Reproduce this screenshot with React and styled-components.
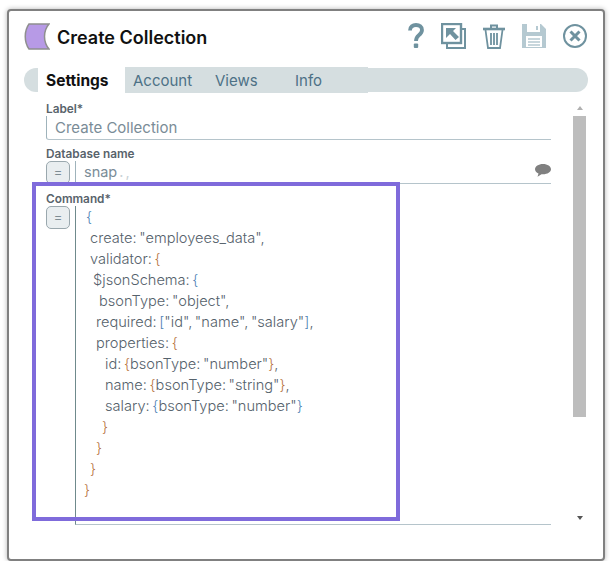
import React from 'react';
import styled, { createGlobalStyle } from 'styled-components';

const Global = createGlobalStyle`
  html, body { margin: 0; padding: 0; background: #fff; }
  body { font-family: "Inter", "Liberation Sans", sans-serif; }
`;
const Dialog = styled.div`
  position: relative; box-sizing: border-box; width: 598px; height: 552px; margin: 9px 0 0 7px;
  background: #fff; border: 2px solid #808080; border-radius: 4px;
  box-shadow: 0 0 5px rgba(0,0,0,.3); padding: 11px 15px 0 15px;
`;
const Header = styled.header`display: flex; align-items: center; height: 28px; padding-right: 1px;`;
const Logo = styled.svg`width: 26px; height: 27px; flex: none;`;
const Title = styled.h1`margin: 2px 0 0 7px; font-size: 18px; font-weight: 600; color: #111; flex: 1;`;
const Tools = styled.div`display: flex; align-items: center; gap: 17px;`;
const ToolIcon = styled.svg`display: block; width: ${p => p.$w}px; height: 26px;`;
const Tabs = styled.nav`display: flex; height: 24px; margin: 18px 0 0; background: #d5dee0; border-radius: 12px; align-items: stretch; padding-left: 14px;`;
const Tab = styled.div`
  box-sizing: border-box; font-size: ${p => p.$active ? 15.5 : 15}px; line-height: 28px; height: 26px; margin-top: -1px; width: ${p => p.$w}px;
  padding-left: ${p => p.$pad}px; background: ${p => p.$active ? '#fff' : '#d5dee0'};
  color: ${p => p.$active ? '#111' : '#4d7186'}; font-weight: ${p => p.$active ? 700 : 400};
`;
const Body = styled.div`display: grid; grid-template-columns: 505px 13px; column-gap: 22px; padding: 10px 0 0 22px;`;
const Fields = styled.div`display: flex; flex-direction: column;`;
const Label = styled.label`display: block; font-size: 11.8px; line-height: 14px; font-weight: 600; color: #58636b;`;
const TextBox = styled.div`
  box-sizing: border-box; height: 24px; border-left: 1px solid #9fb3bb; border-bottom: 1px solid #b5c4cb;
  border-bottom-left-radius: 3px; padding-left: 8px; font-size: 15px; line-height: 24px; color: #7a8c97; margin-bottom: 7px;
`;
const ExprRow = styled.div`display: flex; align-items: stretch; margin-bottom: 8px;`;
const EqButton = styled.button`
  box-sizing: border-box; flex: none; width: 24px; height: 23px; padding: 0; margin-right: 5px;
  border: 1px solid #9aa8ae; border-radius: 5px; background: #e9eef0; color: #7d8c93;
  font: 400 13px/21px "Inter", sans-serif;
`;
const ExprBox = styled.div`
  position: relative; flex: 1; box-sizing: border-box; border-left: 1px solid ${p => p.$dark ? '#6f8a8c' : '#9fb3bb'}; border-bottom: 1px solid #b5c4cb;
  min-height: ${p => p.$h}px; padding-left: 8px; font-size: 14.5px; line-height: 21px; color: #7a8c97;
`;
const Faint = styled.span`color: #c9d2d6; margin-left: 2px;`;
const Bubble = styled.svg`position: absolute; right: 0; top: 3px; width: 16px; height: 13px;`;
const Code = styled.div`margin-left: -8px; padding-top: 1px; font-size: 14.6px; font-weight: 300; word-spacing: -1.5px; line-height: 21px; color: #56626c;`;
const CodeLine = styled.div`height: 21px; padding-left: ${p => p.$i}px; white-space: pre;`;
const Br = styled.span`color: ${p => p.$b ? '#4f83b5' : '#b8743f'};`;
const Scroll = styled.div`display: flex; flex-direction: column; align-items: center; height: 418px; margin-top: 4px;`;
const Arrow = styled.div`
  width: 0; height: 0; border-left: 3.5px solid transparent; border-right: 3.5px solid transparent;
  ${p => p.$up ? 'border-bottom: 4px solid #b0b0b0; margin: 0 0 6px;' : 'border-top: 4px solid #555; margin: 99px 0 0;'}
`;
const Thumb = styled.div`width: 13px; height: 301px; flex: none; background: #bdbdbd;`;
const Highlight = styled.div`
  position: absolute; left: 23px; top: 171px; width: 368px; height: 339px; box-sizing: border-box;
  border: 4px solid #7f6bdb; pointer-events: none;
`;

const B = ({ c, b }) => <Br $b={b}>{c}</Br>;
const lines = [
  [10, <B c="{" b />],
  [14, <>create: "employees_data",</>],
  [14, <>validator: <B c="{" /></>],
  [17, <>$jsonSchema: <B c="{" b /></>],
  [23, <>bsonType: "object",</>],
  [20, <>required: <B c="[" b />"id", "name", "salary"<B c="]" b />,</>],
  [20, <>properties: <B c="{" /></>],
  [29, <>id: <B c="{" />bsonType: "number"<B c="}" />,</>],
  [29, <>name: <B c="{" />bsonType: "string"<B c="}" />,</>],
  [29, <>salary: <B c="{" b />bsonType: "number"<B c="}" b /></>],
  [26, <B c="}" />],
  [20, <B c="}" />],
  [14, <B c="}" />],
  [8, <B c="}" />],
];

export default function App() {
  return (
    <>
      <Global />
      <Dialog>
        <Header>
          <Logo viewBox="0 0 26 27">
            <path d="M5 1 H25 C19 8 19 19 25 26 H5 C0 19 0 8 5 1 Z" fill="#b79ae6" stroke="#8f8f8f" strokeWidth="1.5" />
          </Logo>
          <Title>Create Collection</Title>
          <Tools>
            <ToolIcon $w={16} viewBox="0 0 16 26" fill="none" stroke="#6f929f">
              <path d="M2 7.5 C2 3.5 4.8 2 8 2 C11.6 2 14 3.8 14 7 C14 9.6 12.6 10.8 10.8 12.2 C9 13.6 8 14.6 8 18" strokeWidth="3.8" />
              <rect x="5.8" y="20.5" width="4.4" height="4.4" rx="1" fill="#6f929f" stroke="none" />
            </ToolIcon>
            <ToolIcon $w={25} viewBox="0 0 25 26" fill="none" stroke="#6f929f" strokeWidth="2">
              <rect x="1" y="1" width="19" height="19" strokeWidth="2.4" />
              <path d="M20 6 H24 V25 H6 V20" />
              <path d="M5 5 H15 L12 8 L18 14 L14.5 17 L9 11 L5 15 Z" fill="#6f929f" stroke="none" />
            </ToolIcon>
            <ToolIcon $w={22} viewBox="0 0 22 26" fill="none" stroke="#6f929f" strokeWidth="2">
              <path d="M0 6 H22" strokeWidth="2.6" />
              <path d="M8 5 V2.5 H14 V5" />
              <path d="M2.5 7 L5 25 H17 L19.5 7 M8 10 V22 M11 10 V22 M14 10 V22" strokeWidth="1.8" />
            </ToolIcon>
            <ToolIcon $w={24} viewBox="0 0 24 26">
              <path fillRule="evenodd" fill="#b5c9d1" d="M0 1 H19 L24 6 V25 H0 Z M5 1 V9 H18 V1 Z M14 3 H16 V7 H14 Z M4 13 V24 H20 V13 Z" />
              <path d="M6 16 H18 M6 19 H18 M6 22 H18" stroke="#b5c9d1" strokeWidth="1.4" />
            </ToolIcon>
            <ToolIcon $w={24} viewBox="0 0 24 26" fill="none" stroke="#6f929f">
              <circle cx="12" cy="13" r="11" strokeWidth="2" />
              <path d="M7.5 8.5 L16.5 17.5 M16.5 8.5 L7.5 17.5" strokeWidth="3" />
            </ToolIcon>
          </Tools>
        </Header>
        <Tabs>
          <Tab $active $w={87} $pad={8}>Settings</Tab>
          <Tab $w={82} $pad={8}>Account</Tab>
          <Tab $w={88} $pad={8}>Views</Tab>
          <Tab $w={73} $pad={0}>Info</Tab>
        </Tabs>
        <Body>
          <Fields>
            <Label>Label*</Label>
            <TextBox>Create Collection</TextBox>
            <Label>Database name</Label>
            <ExprRow>
              <EqButton>=</EqButton>
              <ExprBox $h={23}>
                snap<Faint>.</Faint><Faint>,</Faint>
                <Bubble viewBox="0 0 16 13"><path d="M8 0 C12.5 0 16 2.3 16 5.2 C16 8 12.5 10.2 8 10.2 L6.5 10.2 L2.5 12.8 L3.5 9.4 C1.4 8.6 0 7 0 5.2 C0 2.3 3.5 0 8 0 Z" fill="#808080" /></Bubble>
              </ExprBox>
            </ExprRow>
            <Label>Command*</Label>
            <ExprRow>
              <EqButton>=</EqButton>
              <ExprBox $h={319} $dark>
                <Code>
                  {lines.map(([i, c], n) => <CodeLine key={n} $i={i}>{c}</CodeLine>)}
                </Code>
              </ExprBox>
            </ExprRow>
          </Fields>
          <Scroll>
            <Arrow $up />
            <Thumb />
            <Arrow />
          </Scroll>
        </Body>
        <Highlight />
      </Dialog>
    </>
  );
}
